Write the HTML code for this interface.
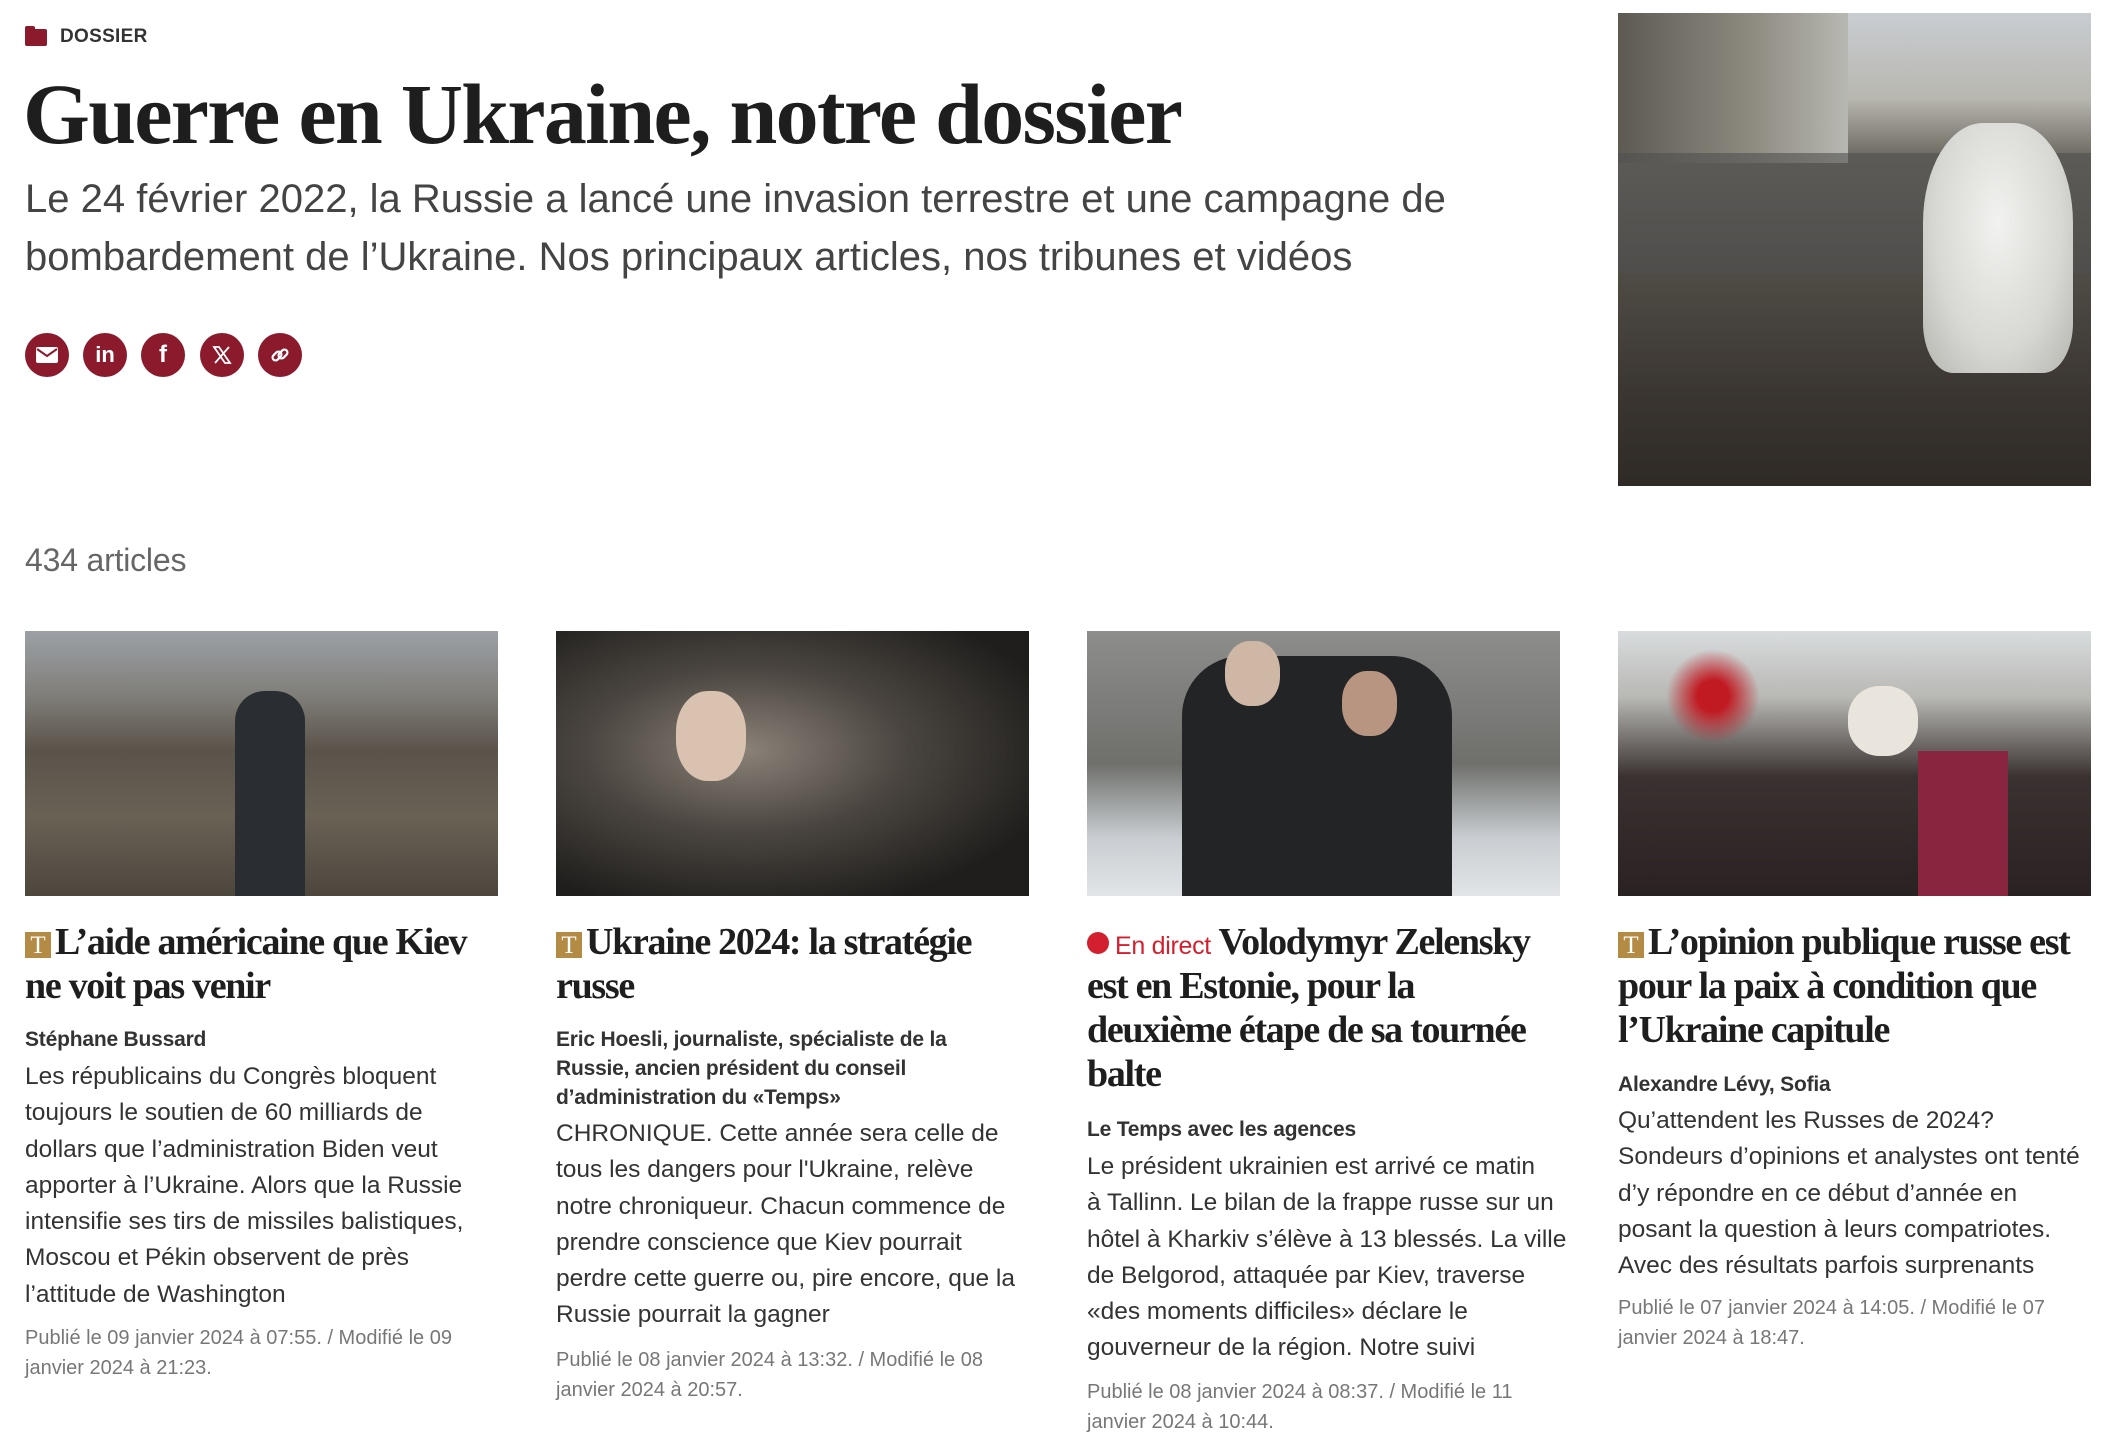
<!DOCTYPE html>
<html><head><meta charset="utf-8">
<style>
*{margin:0;padding:0;box-sizing:border-box}
body{width:2110px;height:1448px;background:#fff;position:relative;overflow:hidden;font-family:"Liberation Sans",sans-serif;color:#222}
.abs{position:absolute}
.dos{left:25px;top:26px;font-size:19px;font-weight:bold;color:#333;letter-spacing:.3px}
.fold{left:25px;top:29px;width:22px;height:17px;background:#8a1a2c;border-radius:2px}
.fold:before{content:"";position:absolute;left:0;top:-3px;width:10px;height:5px;background:#8a1a2c;border-radius:2px 2px 0 0}
h1{position:absolute;left:23px;top:64px;font-family:"Liberation Serif",serif;font-weight:bold;font-size:86px;letter-spacing:-1.7px;color:#1e1e1e;white-space:nowrap;line-height:100px}
.sub{left:25px;top:170px;font-size:40px;line-height:58px;color:#444;letter-spacing:0;white-space:nowrap}
.ic{top:333px;width:44px;height:44px;border-radius:50%;background:#8a1a2c;display:flex;align-items:center;justify-content:center}
.cnt{left:25px;top:542px;font-size:32px;color:#666;letter-spacing:-.2px}
.img{top:631px;width:473px;height:265px}
.t{font-family:"Liberation Serif",serif;font-weight:bold;font-size:38px;line-height:44px;letter-spacing:-1.3px;color:#1e1e1e;white-space:nowrap;top:920px}
.T{display:inline-block;width:26px;height:26px;background:#b38b45;color:#fff;font-size:25px;line-height:28px;text-align:center;font-weight:normal;vertical-align:1px;margin-right:4px;letter-spacing:0}
.au{font-size:21px;font-weight:bold;line-height:29px;color:#333;letter-spacing:-.2px;white-space:nowrap}
.bd{font-size:24.5px;line-height:36.3px;color:#333;letter-spacing:0;white-space:nowrap}
.dt{font-size:20px;line-height:29.6px;color:#777;letter-spacing:0;white-space:nowrap}
.live{color:#d3202f;font-family:"Liberation Sans",sans-serif;font-weight:normal;font-size:25px;letter-spacing:-.3px;line-height:20px}
.dot{display:inline-block;width:22px;height:22px;border-radius:50%;background:#d3202f;vertical-align:0px;margin-right:6px}
</style></head><body>
<div class="abs fold"></div>
<div class="abs dos" style="left:60px">DOSSIER</div>
<h1>Guerre en Ukraine, notre dossier</h1>
<div class="abs sub">Le 24 février 2022, la Russie a lancé une invasion terrestre et une campagne de<br>bombardement de l’Ukraine. Nos principaux articles, nos tribunes et vidéos</div>

<div class="abs ic" style="left:25px"><svg width="22" height="16" viewBox="0 0 22 16"><rect x="0" y="0" width="22" height="16" rx="2" fill="#fff"/><path d="M1 2l10 7 10-7" stroke="#8a1a2c" stroke-width="2" fill="none"/></svg></div>
<div class="abs ic" style="left:83px;color:#fff;font-weight:bold;font-size:22px">in</div>
<div class="abs ic" style="left:141px;color:#fff;font-weight:bold;font-size:24px;font-family:'Liberation Sans'">f</div>
<div class="abs ic" style="left:200px"><svg width="20" height="20" viewBox="0 0 20 20"><path d="M2 2h5l11 16h-5z" fill="none" stroke="#fff" stroke-width="1.8"/><path d="M17 2L3 18" stroke="#fff" stroke-width="1.8"/></svg></div>
<div class="abs ic" style="left:258px"><svg width="22" height="22" viewBox="0 0 22 22"><g fill="none" stroke="#fff" stroke-width="2.2"><rect x="3" y="9" width="10" height="6" rx="3" transform="rotate(-45 8 12)"/><rect x="9" y="7" width="10" height="6" rx="3" transform="rotate(-45 14 10)"/></g></svg></div>

<div class="abs" style="left:1618px;top:13px;width:473px;height:473px;background:linear-gradient(180deg,#c9cdd2 0%,#b8b7b0 18%,#6f6b63 30%,#4f4b45 55%,#3b3631 80%,#2f2a25 100%);overflow:hidden">
 <div class="abs" style="left:0;top:0;width:230px;height:150px;background:linear-gradient(90deg,#5d5a52,#8f8c82 60%,#b8b8b2)"></div>
 <div class="abs" style="left:0;top:140px;width:473px;height:120px;background:#505050;opacity:.6"></div>
 <div class="abs" style="left:305px;top:110px;width:150px;height:250px;background:radial-gradient(ellipse at 50% 40%,#f2f2f0,#d7d7d3 60%,#b5b5b0);border-radius:40% 40% 20% 20%"></div>
</div>

<div class="abs cnt">434 articles</div>

<div class="abs img" style="left:25px;background:linear-gradient(180deg,#9ca1a6 0%,#7f7d78 25%,#5a534a 45%,#6a6155 70%,#4d463d 100%)"><div class="abs" style="left:210px;top:60px;width:70px;height:205px;background:#2a2e33;border-radius:30px 30px 0 0"></div></div>
<div class="abs img" style="left:556px;background:radial-gradient(ellipse at 40% 45%,#8a8278 0%,#4a4540 40%,#1f1e1c 80%)"><div class="abs" style="left:120px;top:60px;width:70px;height:90px;background:#d9c3b0;border-radius:45%"></div></div>
<div class="abs img" style="left:1087px;background:linear-gradient(180deg,#8d8e8c 0%,#6f706c 50%,#c9cdd1 78%,#e2e5e8 100%)"><div class="abs" style="left:95px;top:25px;width:270px;height:240px;background:#222426;border-radius:60px 60px 0 0"></div><div class="abs" style="left:138px;top:10px;width:55px;height:65px;background:#cfb7a5;border-radius:45%"></div><div class="abs" style="left:255px;top:40px;width:55px;height:65px;background:#b89580;border-radius:45%"></div></div>
<div class="abs img" style="left:1618px;background:linear-gradient(180deg,#d9dcde 0%,#b8b8b4 25%,#3a3231 55%,#2a2222 100%)"><div class="abs" style="left:40px;top:10px;width:110px;height:110px;background:radial-gradient(circle,#c11a22 20%,transparent 60%)"></div><div class="abs" style="left:230px;top:55px;width:70px;height:70px;background:#e9e4dc;border-radius:45%"></div><div class="abs" style="left:300px;top:120px;width:90px;height:145px;background:#8a2540"></div></div>

<!-- card 1 -->
<div class="abs t" style="left:25px"><span class="T">T</span>L’aide américaine que Kiev<br>ne voit pas venir</div>
<div class="abs au" style="left:25px;top:1025px">Stéphane Bussard</div>
<div class="abs bd" style="left:25px;top:1059px">Les républicains du Congrès bloquent<br>toujours le soutien de 60 milliards de<br>dollars que l’administration Biden veut<br>apporter à l’Ukraine. Alors que la Russie<br>intensifie ses tirs de missiles balistiques,<br>Moscou et Pékin observent de près<br>l’attitude de Washington</div>
<div class="abs dt" style="left:25px;top:1324px">Publié le 09 janvier 2024 à 07:55. / Modifié le 09<br>janvier 2024 à 21:23.</div>

<!-- card 2 -->
<div class="abs t" style="left:556px"><span class="T">T</span>Ukraine 2024: la stratégie<br>russe</div>
<div class="abs au" style="left:556px;top:1025px">Eric Hoesli, journaliste, spécialiste de la<br>Russie, ancien président du conseil<br>d’administration du «Temps»</div>
<div class="abs bd" style="left:556px;top:1116px">CHRONIQUE. Cette année sera celle de<br>tous les dangers pour l'Ukraine, relève<br>notre chroniqueur. Chacun commence de<br>prendre conscience que Kiev pourrait<br>perdre cette guerre ou, pire encore, que la<br>Russie pourrait la gagner</div>
<div class="abs dt" style="left:556px;top:1346px">Publié le 08 janvier 2024 à 13:32. / Modifié le 08<br>janvier 2024 à 20:57.</div>

<!-- card 3 -->
<div class="abs t" style="left:1087px"><span class="dot"></span><span class="live">En direct</span> Volodymyr Zelensky<br>est en Estonie, pour la<br>deuxième étape de sa tournée<br>balte</div>
<div class="abs au" style="left:1087px;top:1115px">Le Temps avec les agences</div>
<div class="abs bd" style="left:1087px;top:1149px">Le président ukrainien est arrivé ce matin<br>à Tallinn. Le bilan de la frappe russe sur un<br>hôtel à Kharkiv s’élève à 13 blessés. La ville<br>de Belgorod, attaquée par Kiev, traverse<br>«des moments difficiles» déclare le<br>gouverneur de la région. Notre suivi</div>
<div class="abs dt" style="left:1087px;top:1378px">Publié le 08 janvier 2024 à 08:37. / Modifié le 11<br>janvier 2024 à 10:44.</div>

<!-- card 4 -->
<div class="abs t" style="left:1618px"><span class="T">T</span>L’opinion publique russe est<br>pour la paix à condition que<br>l’Ukraine capitule</div>
<div class="abs au" style="left:1618px;top:1070px">Alexandre Lévy, Sofia</div>
<div class="abs bd" style="left:1618px;top:1103px">Qu’attendent les Russes de 2024?<br>Sondeurs d’opinions et analystes ont tenté<br>d’y répondre en ce début d’année en<br>posant la question à leurs compatriotes.<br>Avec des résultats parfois surprenants</div>
<div class="abs dt" style="left:1618px;top:1294px">Publié le 07 janvier 2024 à 14:05. / Modifié le 07<br>janvier 2024 à 18:47.</div>
</body></html>
